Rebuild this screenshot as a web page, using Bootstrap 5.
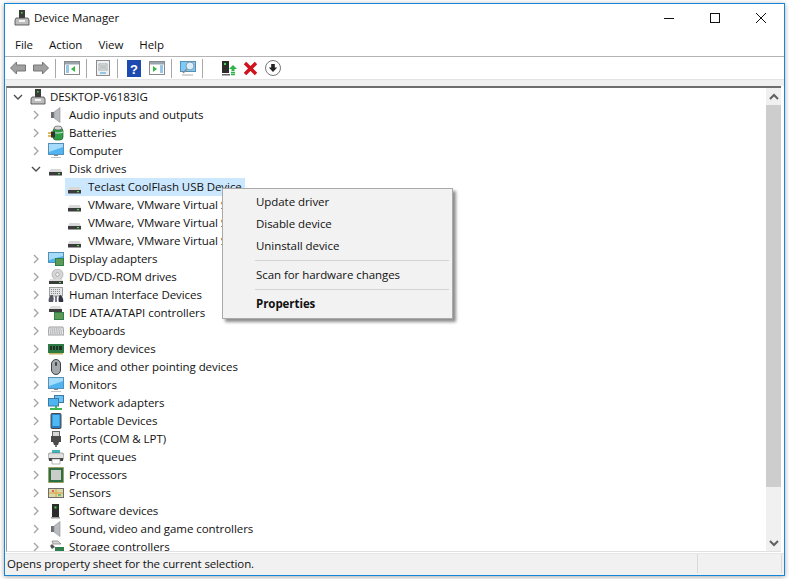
<!DOCTYPE html>
<html lang="en"><head><meta charset="utf-8"><title>Device Manager</title>
<link href="https://cdn.jsdelivr.net/npm/bootstrap@5.3.0/dist/css/bootstrap.min.css" rel="stylesheet">
<style>
html,body{height:579px;overflow:hidden;background:#fff}
body{font-family:"Open Sans","Noto Sans",sans-serif;font-size:11.5px;letter-spacing:-.06px;color:#111;padding:3px 4px}
.win{width:781px;height:573px;border:1px solid #1585d6;background:#fff;box-shadow:0 1px 5px rgba(0,0,0,.35);position:relative}
.tbar{height:31px;padding:0 0 3px 9px}
.tbar .ttl{margin-left:4px}
.wbtn{width:46px;height:28px}
.mbar{height:21px;padding:0 0 2px 10px}
.mbar span{margin-right:16px}
.tools{height:24px;border-top:1px solid #b4b4b4;padding:1px 0 0 5px}
.tools svg{flex:none}
.sep{width:1px;height:19px;background:#a8a8a8;flex:none;margin:0 8px 0 6px}
.g1{margin-left:1px}.g6{margin-left:6px}.g7{margin-left:7px}.g8{margin-left:8px}.g10{margin-left:10px}
.strip{height:7px;background:#f0f0f0;border-top:1px solid #e3e3e3}
.pane{height:466px;margin-left:1px;margin-right:3px;border-top:2px solid #6d6d6d;border-left:1px solid #9a9a9a;border-bottom:1px solid #e0e0e0;background:#fff}
.tree{overflow:hidden}
.row-t{height:18px;white-space:nowrap;line-height:18px}
.l0{padding-left:6px}.l1{padding-left:24px}.l2{padding-left:60px}
.chev{width:10px;height:10px;flex:none;margin-right:7px}
.ico{width:16px;height:16px;flex:none;margin-right:5px}
.l0 .ico{margin-right:4px}
.sel{background:#cce8ff;width:180px;margin-left:58px;padding-left:2px}
.vbar{width:15px;background:#f0f0f0}
.thumb{height:382px;background:#cdcdcd}
.arrow{height:17px}
.status{height:22px;border-top:1px solid #e6e6e6;background:#f1f1f1;padding:0 0 2px 2px;margin-top:1px;letter-spacing:-.12px}
.status .txt{width:690px}
.status .cell{width:85px;border-left:1px solid #d9d9d9;height:19px;border-right:1px solid #d9d9d9}
.menu{position:absolute;left:217px;top:184px;width:231px;height:131px;background:#f2f2f2;border:1px solid #a9a9a9;border-radius:0;padding:2px;box-shadow:3px 3px 3px rgba(0,0,0,.45);display:block;min-width:0}
.menu .dropdown-item{padding:0 0 0 31px;height:22px;line-height:22px;color:#111;font-size:11.5px;background:none}
.menu .dropdown-divider{margin:3px 1px 3px 30px;border-color:#d4d4d4;opacity:1}
</style></head>
<body>
<svg width="0" height="0" class="position-absolute">
<defs>
<symbol id="i-pc" viewBox="0 0 16 16"><rect x="5" y="0" width="6" height="8" fill="#3a3a3a"/><rect x="7" y="2" width="1.600" height="1.600" fill="#3fd13f"/><path d="M2 8h12l1 2v5H1v-5z" fill="#bdbdbd" stroke="#444" stroke-width=".8"/><rect x="5" y="10" width="6" height="2" fill="#f4f4f4"/></symbol>
<symbol id="i-audio" viewBox="0 0 16 16"><rect x="3" y="5" width="3" height="6" fill="#6f6f6f"/><path d="M6 5l6-4.500v15L6 11z" fill="#b8bcc0" stroke="#8b8f93" stroke-width=".6"/></symbol>
<symbol id="i-batt" viewBox="0 0 16 16"><rect x="5" y="3" width="10" height="12" rx="3" fill="#2f9e46" stroke="#1d5f2c" stroke-width=".7"/><path d="M5 7c3 1.400 7 1.400 10 0" stroke="#cfeedd" fill="none"/><ellipse cx="10" cy="3" rx="4" ry="2" fill="#d5d5d5" stroke="#444" stroke-width=".6"/><path d="M0 8h5M0 11h5" stroke="#d8a51d" stroke-width="1.400"/><rect x="3" y="6.500" width="4" height="6" fill="#333"/></symbol>
<symbol id="i-mon" viewBox="0 0 16 16"><rect x="0.500" y="0.500" width="15" height="11" fill="#4fb4f2" stroke="#5a8fb4"/><path d="M1 1h14v3L1 9z" fill="#a6dcfb"/><path d="M6 12h4v1H6z" fill="#8a8a8a"/><path d="M3 14h10v1H3z" fill="#c4c4c4"/></symbol>
<symbol id="i-disk" viewBox="0 0 16 16"><path d="M2.500 8h10l1.500 3H1z" fill="#d8d8d8"/><rect x="1" y="11" width="13" height="3.500" fill="#3c3c3c"/><rect x="10" y="12" width="2" height="1.200" fill="#4fe04f"/></symbol>
<symbol id="i-disp" viewBox="0 0 16 16"><rect x="0.500" y="1.500" width="15" height="10" fill="#4fb4f2" stroke="#5a8fb4"/><path d="M1 2h14v3L1 9z" fill="#a6dcfb"/><rect x="7" y="7" width="9" height="8" fill="#2f7f4d"/><path d="M8 9h7M8 11h7M8 13h7" stroke="#b6cf5e" stroke-width=".7"/></symbol>
<symbol id="i-dvd" viewBox="0 0 16 16"><circle cx="9.500" cy="5.500" r="5.500" fill="#d6d6d6" stroke="#9c9c9c" stroke-width=".6"/><circle cx="9.500" cy="5.500" r="1.800" fill="#f4f4f4" stroke="#888" stroke-width=".6"/><path d="M2 10h12l1 2H1z" fill="#dcdcdc"/><rect x="1" y="12" width="14" height="3" fill="#3c3c3c"/><rect x="11" y="13" width="2" height="1" fill="#4fe04f"/></symbol>
<symbol id="i-hid" viewBox="0 0 16 16"><rect x="1.500" y="0.500" width="13" height="8.500" fill="#e3e5e8" stroke="#8c8c8c" stroke-width=".8"/><path d="M3 2.500h10M3 4.500h10M3 6.500h10" stroke="#8c8c8c" stroke-dasharray="1 1"/><path d="M3 8c-2 1-3 6-2 7h4c1-2 1-5-.5-7z" fill="#556"/><path d="M12 8c2 0 4 5 3 7h-4c-1-2-.5-6 1-7z" fill="#334"/><rect x="7" y="9" width="2" height="6" fill="#778"/></symbol>
<symbol id="i-ide" viewBox="0 0 16 16"><path d="M3 1h9l2 3H1z" fill="#dedede"/><rect x="1" y="4" width="13" height="3" fill="#3e3e3e"/><rect x="6" y="7" width="10" height="8" fill="#2f7f4d"/><path d="M7 9h8M7 11h8M7 13h8" stroke="#b6cf5e" stroke-width=".7"/></symbol>
<symbol id="i-kbd" viewBox="0 0 16 16"><path d="M1 4h14l1 8H0z" fill="#e4e6e8" stroke="#8a8a8a" stroke-width=".8"/><path d="M2.500 6h11M2.300 8h11.500M2 10h12" stroke="#85898d" stroke-dasharray="1 .8"/></symbol>
<symbol id="i-mem" viewBox="0 0 16 16"><rect x="0" y="3" width="16" height="9" fill="#2d7a45"/><path d="M2 5h2v4H2zM5 5h2v4H5zM8 5h2v4H8zM11 5h3v4h-3z" fill="#23302a"/><path d="M1 12h14v1.500H1z" fill="#c2b35a"/></symbol>
<symbol id="i-mouse" viewBox="0 0 16 16"><rect x="3.500" y="0.500" width="9" height="15" rx="4.500" fill="#a5a9ad" stroke="#3f4347"/><rect x="7" y="3" width="2" height="4" rx="1" fill="#3f4347"/></symbol>
<symbol id="i-net" viewBox="0 0 16 16"><rect x="6.500" y="0.500" width="9" height="7" fill="#6cc1f5" stroke="#3d79a3"/><rect x="0.500" y="3.500" width="10" height="7.500" fill="#4fb4f2" stroke="#3d79a3"/><path d="M2 14h12" stroke="#3fb552" stroke-width="2"/><path d="M8 11v3" stroke="#3fb552" stroke-width="2"/></symbol>
<symbol id="i-port" viewBox="0 0 16 16"><rect x="3" y="0.500" width="10" height="15" rx="1" fill="#2a7cc0" stroke="#4a4a4a"/><rect x="4.500" y="2" width="7" height="11" fill="#4fb9f6"/></symbol>
<symbol id="i-com" viewBox="0 0 16 16"><rect x="4.500" y="0.500" width="7" height="5" fill="#d8d8d8" stroke="#666"/><rect x="3" y="5" width="10" height="6" fill="#4a4a4a"/><path d="M5 11h6l-1 3H6z" fill="#4a4a4a"/><rect x="7" y="14" width="2" height="2" fill="#777"/></symbol>
<symbol id="i-prn" viewBox="0 0 16 16"><path d="M4 1h8v3H4z" fill="#3fb6b8"/><path d="M1 4h14l1 3v3H0V7z" fill="#e0e0e0" stroke="#777" stroke-width=".6"/><rect x="1" y="9" width="14" height="3" fill="#444"/><rect x="4" y="10" width="8" height="5" fill="#fff" stroke="#888" stroke-width=".6"/></symbol>
<symbol id="i-cpu" viewBox="0 0 16 16"><rect x="0.500" y="0.500" width="15" height="15" fill="#2d7045" stroke="#a48a2a" stroke-dasharray="1 1"/><rect x="3" y="3" width="10" height="10" fill="#c9cdc9"/></symbol>
<symbol id="i-sens" viewBox="0 0 16 16"><rect x="0.500" y="3.500" width="15" height="9" fill="#d9d8a8" stroke="#6d6d6d"/><path d="M8 4v8M1 8h14" stroke="#e0a040"/><rect x="4" y="5" width="2" height="2" fill="#e25a5a"/><rect x="10" y="9" width="3" height="2" fill="#7ebd6a"/></symbol>
<symbol id="i-soft" viewBox="0 0 16 16"><rect x="4" y="1" width="7" height="13" fill="#2c2c2c"/><rect x="6.500" y="3.500" width="2" height="2" fill="#43d943"/><rect x="3" y="14" width="9" height="1.500" fill="#9a9a9a"/></symbol>
<symbol id="i-stor" viewBox="0 0 16 16"><path d="M4 2h6l3 3H5z" fill="#d8d8d8" stroke="#666" stroke-width=".6"/><path d="M2 7l2-2 3 3-3 2z" fill="#555"/><rect x="7" y="8" width="9" height="6" fill="#2f7f4d"/><path d="M1 13h6" stroke="#666"/></symbol>
<symbol id="c-r" viewBox="0 0 10 10"><path d="M3 1l4 4-4 4" fill="none" stroke="#a6a6a6" stroke-width="1.400"/></symbol>
<symbol id="c-d" viewBox="0 0 10 10"><path d="M1 3l4 4 4-4" fill="none" stroke="#4d4d4d" stroke-width="1.400"/></symbol>
</defs></svg>

<div class="win d-flex flex-column">
  <div class="tbar d-flex align-items-center justify-content-between">
    <div class="d-flex align-items-center"><svg width="16" height="16"><use href="#i-pc"/></svg><span class="ttl">Device Manager</span></div>
    <div class="d-flex">
      <div class="wbtn d-flex align-items-center justify-content-center"><svg width="12" height="12"><path d="M1 6.500h10" stroke="#111"/></svg></div>
      <div class="wbtn d-flex align-items-center justify-content-center"><svg width="12" height="12"><rect x="1.500" y="1.500" width="9" height="9" fill="none" stroke="#111"/></svg></div>
      <div class="wbtn d-flex align-items-center justify-content-center"><svg width="12" height="12"><path d="M1 1l10 10M11 1L1 11" stroke="#111"/></svg></div>
    </div>
  </div>
  <div class="mbar d-flex align-items-center"><span>File</span><span>Action</span><span>View</span><span>Help</span></div>
  <div class="tools d-flex align-items-center">
    <svg width="16" height="16"><path d="M.5 8l6-6v3h9v6h-9v3z" fill="#a0a0a0" stroke="#777"/></svg>
    <svg width="16" height="16" class="g7"><path d="M15.500 8l-6-6v3h-9v6h9v3z" fill="#a0a0a0" stroke="#777"/></svg>
    <span class="sep"></span>
    <svg width="16" height="16"><rect x=".5" y="1.500" width="15" height="13" fill="#fff" stroke="#8a8a8a"/><rect x="1" y="2" width="14" height="2.500" fill="#9aa4ae"/><path d="M2 6h3M2 8h3M2 10h3M2 12h3" stroke="#2f8fd1"/><path d="M11 6v6L7 9z" fill="#3bb54a"/></svg>
    <span class="sep"></span>
    <svg width="16" height="16"><rect x="1.500" y=".5" width="13" height="15" fill="#eef0f2" stroke="#8a8a8a"/><rect x="4" y="4" width="8" height="6" fill="#fff" stroke="#9aa"/><path d="M5 6h6M5 8h6" stroke="#8a8a8a"/><path d="M5 13h6" stroke="#3d9bd8"/></svg>
    <span class="sep"></span>
    <svg width="14" height="17" class="g1"><rect width="14" height="17" fill="#1d4ab0"/><text x="7" y="13.500" text-anchor="middle" font-family="Liberation Sans" font-weight="700" font-size="13" fill="#fff">?</text></svg>
    <svg width="16" height="16" class="g8"><rect x=".5" y="1.500" width="15" height="13" fill="#fff" stroke="#8a8a8a"/><rect x="1" y="2" width="14" height="2.500" fill="#9aa4ae"/><path d="M11 6h3M11 8h3M11 10h3M11 12h3" stroke="#2f8fd1"/><path d="M4 6v6l4-3z" fill="#3bb54a"/></svg>
    <span class="sep"></span>
    <svg width="16" height="16"><rect x=".5" y="1.500" width="15" height="10" fill="#7ccaf7" stroke="#5a8fb4"/><path d="M2 15h11" stroke="#aaa"/><circle cx="10" cy="6" r="4" fill="#d9effb" stroke="#8a9aa6"/><path d="M7 9l-4 4" stroke="#8a8a8a" stroke-width="1.500"/></svg>
    <span class="sep"></span>
    <svg width="16" height="16" class="g10"><rect x="1" y="1" width="7" height="12" fill="#2c2c2c"/><rect x="3" y="3" width="2" height="2" fill="#43d943"/><rect x="1" y="14" width="8" height="1.500" fill="#666"/><path d="M12 5l4 4h-2.500v2h-3V9H8z" fill="#2fb44a"/><path d="M10 12.500h4M10 14.500h4" stroke="#2fb44a" stroke-width="1.300"/></svg>
    <svg width="15" height="15" class="g6"><path d="M2 2l11 11M13 2L2 13" stroke="#d0121b" stroke-width="3.400"/></svg>
    <svg width="16" height="16" class="g7"><circle cx="8" cy="8" r="7.500" fill="#fff" stroke="#777"/><path d="M8 12L3.800 7.500H6.200V4h3.600v3.500h2.400z" fill="#222"/></svg>
  </div>
  <div class="strip"></div>
  <div class="pane d-flex">
    <div class="tree flex-grow-1">
      <div class="row-t d-flex align-items-center l0"><svg class="chev"><use href="#c-d"/></svg><svg class="ico"><use href="#i-pc"/></svg>DESKTOP-V6183IG</div>
      <div class="row-t d-flex align-items-center l1"><svg class="chev"><use href="#c-r"/></svg><svg class="ico"><use href="#i-audio"/></svg>Audio inputs and outputs</div>
      <div class="row-t d-flex align-items-center l1"><svg class="chev"><use href="#c-r"/></svg><svg class="ico"><use href="#i-batt"/></svg>Batteries</div>
      <div class="row-t d-flex align-items-center l1"><svg class="chev"><use href="#c-r"/></svg><svg class="ico"><use href="#i-mon"/></svg>Computer</div>
      <div class="row-t d-flex align-items-center l1"><svg class="chev"><use href="#c-d"/></svg><svg class="ico"><use href="#i-disk"/></svg>Disk drives</div>
      <div class="row-t d-flex align-items-center sel"><svg class="ico"><use href="#i-disk"/></svg><span>Teclast CoolFlash USB Device</span></div>
      <div class="row-t d-flex align-items-center l2"><svg class="ico"><use href="#i-disk"/></svg>VMware, VMware Virtual S</div>
      <div class="row-t d-flex align-items-center l2"><svg class="ico"><use href="#i-disk"/></svg>VMware, VMware Virtual S</div>
      <div class="row-t d-flex align-items-center l2"><svg class="ico"><use href="#i-disk"/></svg>VMware, VMware Virtual S</div>
      <div class="row-t d-flex align-items-center l1"><svg class="chev"><use href="#c-r"/></svg><svg class="ico"><use href="#i-disp"/></svg>Display adapters</div>
      <div class="row-t d-flex align-items-center l1"><svg class="chev"><use href="#c-r"/></svg><svg class="ico"><use href="#i-dvd"/></svg>DVD/CD-ROM drives</div>
      <div class="row-t d-flex align-items-center l1"><svg class="chev"><use href="#c-r"/></svg><svg class="ico"><use href="#i-hid"/></svg>Human Interface Devices</div>
      <div class="row-t d-flex align-items-center l1"><svg class="chev"><use href="#c-r"/></svg><svg class="ico"><use href="#i-ide"/></svg>IDE ATA/ATAPI controllers</div>
      <div class="row-t d-flex align-items-center l1"><svg class="chev"><use href="#c-r"/></svg><svg class="ico"><use href="#i-kbd"/></svg>Keyboards</div>
      <div class="row-t d-flex align-items-center l1"><svg class="chev"><use href="#c-r"/></svg><svg class="ico"><use href="#i-mem"/></svg>Memory devices</div>
      <div class="row-t d-flex align-items-center l1"><svg class="chev"><use href="#c-r"/></svg><svg class="ico"><use href="#i-mouse"/></svg>Mice and other pointing devices</div>
      <div class="row-t d-flex align-items-center l1"><svg class="chev"><use href="#c-r"/></svg><svg class="ico"><use href="#i-mon"/></svg>Monitors</div>
      <div class="row-t d-flex align-items-center l1"><svg class="chev"><use href="#c-r"/></svg><svg class="ico"><use href="#i-net"/></svg>Network adapters</div>
      <div class="row-t d-flex align-items-center l1"><svg class="chev"><use href="#c-r"/></svg><svg class="ico"><use href="#i-port"/></svg>Portable Devices</div>
      <div class="row-t d-flex align-items-center l1"><svg class="chev"><use href="#c-r"/></svg><svg class="ico"><use href="#i-com"/></svg>Ports (COM &amp; LPT)</div>
      <div class="row-t d-flex align-items-center l1"><svg class="chev"><use href="#c-r"/></svg><svg class="ico"><use href="#i-prn"/></svg>Print queues</div>
      <div class="row-t d-flex align-items-center l1"><svg class="chev"><use href="#c-r"/></svg><svg class="ico"><use href="#i-cpu"/></svg>Processors</div>
      <div class="row-t d-flex align-items-center l1"><svg class="chev"><use href="#c-r"/></svg><svg class="ico"><use href="#i-sens"/></svg>Sensors</div>
      <div class="row-t d-flex align-items-center l1"><svg class="chev"><use href="#c-r"/></svg><svg class="ico"><use href="#i-soft"/></svg>Software devices</div>
      <div class="row-t d-flex align-items-center l1"><svg class="chev"><use href="#c-r"/></svg><svg class="ico"><use href="#i-audio"/></svg>Sound, video and game controllers</div>
      <div class="row-t d-flex align-items-center l1"><svg class="chev"><use href="#c-r"/></svg><svg class="ico"><use href="#i-stor"/></svg>Storage controllers</div>
    </div>
    <div class="vbar d-flex flex-column">
      <div class="arrow d-flex align-items-center justify-content-center"><svg width="10" height="8"><path d="M1 6l4-4 4 4" fill="none" stroke="#606060" stroke-width="2"/></svg></div>
      <div class="thumb"></div>
      <div class="flex-grow-1"></div>
      <div class="arrow d-flex align-items-center justify-content-center"><svg width="10" height="8"><path d="M1 2l4 4 4-4" fill="none" stroke="#606060" stroke-width="2"/></svg></div>
    </div>
  </div>
  <div class="status d-flex align-items-center"><div class="txt">Opens property sheet for the current selection.</div><div class="cell"></div></div>
  <div class="dropdown-menu show menu">
    <a class="dropdown-item" href="#">Update driver</a>
    <a class="dropdown-item" href="#">Disable device</a>
    <a class="dropdown-item" href="#">Uninstall device</a>
    <hr class="dropdown-divider">
    <a class="dropdown-item" href="#">Scan for hardware changes</a>
    <hr class="dropdown-divider">
    <a class="dropdown-item fw-bold" href="#">Properties</a>
  </div>
</div>
</body></html>
